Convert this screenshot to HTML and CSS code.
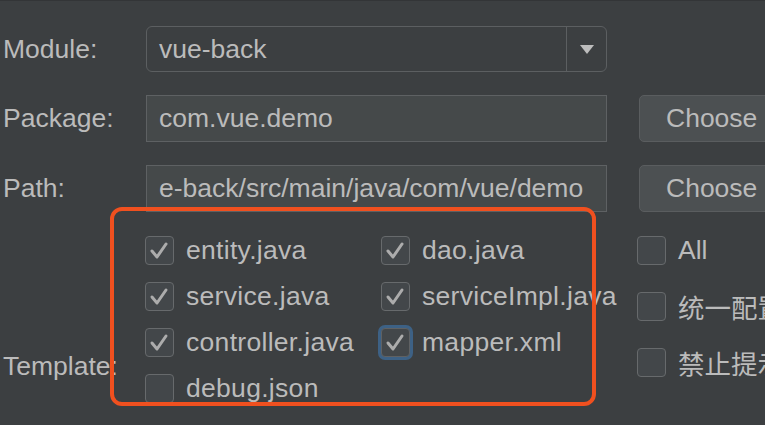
FILE: index.html
```html
<!DOCTYPE html>
<html>
<head>
<meta charset="utf-8">
<link rel="stylesheet" href="styles.css">
</head>
<body>
<div class="dialog">
  <div class="row row-module">
    <div class="label">Module:</div>
    <div class="combo">
      <span class="combo-text">vue-back</span>
      <span class="combo-btn"><svg width="16" height="11" viewBox="0 0 16 11"><polygon points="1,1 15,1 8,10" fill="#bdbdbd"/></svg></span>
    </div>
  </div>
  <div class="row">
    <div class="label">Package:</div>
    <div class="field">com.vue.demo</div>
    <div class="button">Choose</div>
  </div>
  <div class="row">
    <div class="label">Path:</div>
    <div class="field">e-back/src/main/java/com/vue/demo</div>
    <div class="button">Choose</div>
  </div>
  <div class="template">
    <div class="label template-label">Template:</div>
    <div class="checks">
      <label class="check"><span class="box on"><svg width="29" height="29" viewBox="0 0 29 29"><polyline points="7,15 12,21 21,8" fill="none" stroke="#acacac" stroke-width="3" stroke-linecap="round" stroke-linejoin="round"/></svg></span>entity.java</label>
      <label class="check"><span class="box on"><svg width="29" height="29" viewBox="0 0 29 29"><polyline points="7,15 12,21 21,8" fill="none" stroke="#acacac" stroke-width="3" stroke-linecap="round" stroke-linejoin="round"/></svg></span>dao.java</label>
      <label class="check"><span class="box on"><svg width="29" height="29" viewBox="0 0 29 29"><polyline points="7,15 12,21 21,8" fill="none" stroke="#acacac" stroke-width="3" stroke-linecap="round" stroke-linejoin="round"/></svg></span>service.java</label>
      <label class="check"><span class="box on"><svg width="29" height="29" viewBox="0 0 29 29"><polyline points="7,15 12,21 21,8" fill="none" stroke="#acacac" stroke-width="3" stroke-linecap="round" stroke-linejoin="round"/></svg></span>serviceImpl.java</label>
      <label class="check"><span class="box on"><svg width="29" height="29" viewBox="0 0 29 29"><polyline points="7,15 12,21 21,8" fill="none" stroke="#acacac" stroke-width="3" stroke-linecap="round" stroke-linejoin="round"/></svg></span>controller.java</label>
      <label class="check"><span class="box on focus"><svg width="29" height="29" viewBox="0 0 29 29"><polyline points="7,15 12,21 21,8" fill="none" stroke="#acacac" stroke-width="3" stroke-linecap="round" stroke-linejoin="round"/></svg></span>mapper.xml</label>
      <label class="check"><span class="box"></span>debug.json</label>
    </div>
    <div class="extras">
      <label class="check"><span class="box"></span>All</label>
      <label class="check"><span class="box"></span>统一配置</label>
      <label class="check"><span class="box"></span>禁止提示</label>
    </div>
  </div>
  <div class="highlight"></div>
</div>
</body>
</html>
```

FILE: styles.css
```css
html, body {
  margin: 0;
  padding: 0;
  background: #3c3f41;
}
body {
  width: 765px;
  height: 425px;
  overflow: hidden;
  font-family: "Liberation Sans", Arial, "Noto Sans CJK SC", sans-serif;
  font-size: 26.5px;
  color: #bbbbbb;
}
.dialog {
  position: relative;
  width: 765px;
  height: 425px;
  border-top: 1px solid #333537;
  box-sizing: border-box;
  padding-top: 25px;
}
.row {
  display: flex;
  align-items: center;
  height: 47px;
  margin-bottom: 23px;
}
.row-module {
  height: 46px;
}
.label {
  width: 146px;
  padding-left: 3px;
  box-sizing: border-box;
  flex: none;
}
.combo {
  width: 461px;
  height: 46px;
  box-sizing: border-box;
  border: 1px solid #5c5f61;
  border-radius: 6px;
  display: flex;
  align-items: stretch;
  background: #3c3f41;
}
.combo-text {
  flex: 1;
  display: flex;
  align-items: center;
  padding-left: 12px;
}
.combo-btn {
  width: 39px;
  border-left: 1px solid #5c5f61;
  display: flex;
  align-items: center;
  justify-content: center;
}
.field {
  width: 461px;
  height: 47px;
  box-sizing: border-box;
  border: 1px solid #5e6163;
  background: #45494a;
  padding-left: 12px;
  display: flex;
  align-items: center;
  overflow: hidden;
  white-space: nowrap;
  flex: none;
}
.button {
  margin-left: 32px;
  width: 140px;
  height: 47px;
  box-sizing: border-box;
  border: 1px solid #5a5d5f;
  border-radius: 5px;
  background: #4c5052;
  padding-left: 26px;
  display: flex;
  align-items: center;
  flex: none;
  white-space: nowrap;
}
.template {
  display: flex;
  margin-top: -8px;
}
.template-label {
  align-self: flex-start;
  margin-top: 124px;
  width: 145px;
}
.checks {
  display: grid;
  grid-template-columns: 236px 256px;
  grid-auto-rows: 46px;
  width: 492px;
  flex: none;
  letter-spacing: 0.3px;
}
.check {
  display: flex;
  align-items: center;
  white-space: nowrap;
  height: 46px;
}
.box {
  width: 29px;
  height: 29px;
  box-sizing: border-box;
  border: 1px solid #676a6c;
  border-radius: 4px;
  background: #43474a;
  margin-right: 12px;
  flex: none;
  position: relative;
  display: flex;
  align-items: center;
  justify-content: center;
}
.box svg {
  position: absolute;
  left: -1px;
  top: -1px;
}
.box.focus {
  border-color: #5f6163;
  box-shadow: 0 0 0 3px #3d6185;
}
.extras {
  display: flex;
  flex-direction: column;
  gap: 10px;
  overflow: hidden;
}
.highlight {
  position: absolute;
  left: 110px;
  top: 206px;
  width: 486px;
  height: 199px;
  box-sizing: border-box;
  border: 4px solid #f0501f;
  border-radius: 12px;
}
```
